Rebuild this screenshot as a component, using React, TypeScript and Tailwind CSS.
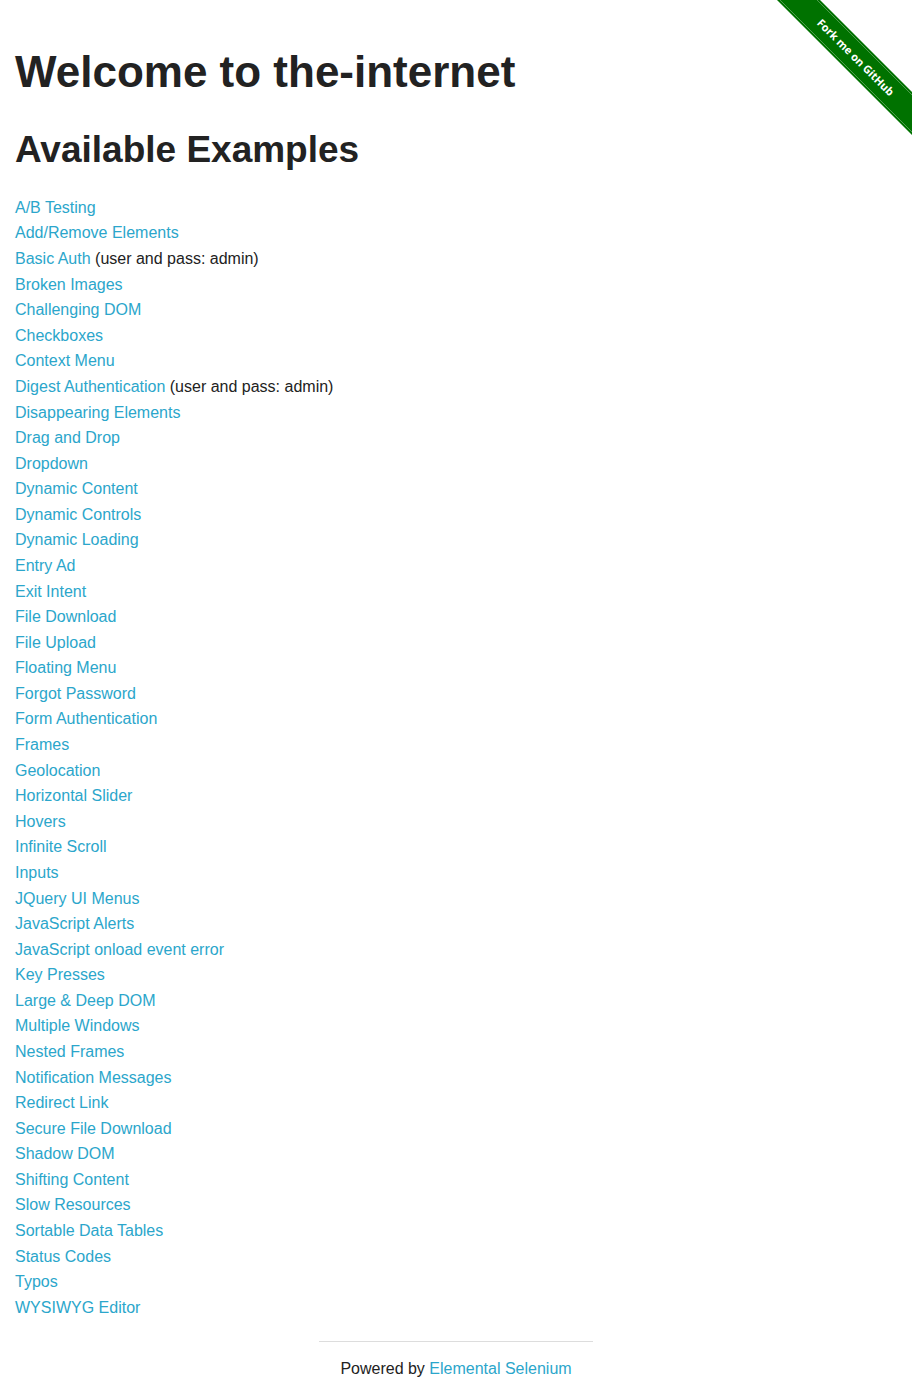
import React from "react";

const items: { name: string; note?: string }[] = [
  { name: "A/B Testing" },
  { name: "Add/Remove Elements" },
  { name: "Basic Auth", note: "(user and pass: admin)" },
  { name: "Broken Images" },
  { name: "Challenging DOM" },
  { name: "Checkboxes" },
  { name: "Context Menu" },
  { name: "Digest Authentication", note: "(user and pass: admin)" },
  { name: "Disappearing Elements" },
  { name: "Drag and Drop" },
  { name: "Dropdown" },
  { name: "Dynamic Content" },
  { name: "Dynamic Controls" },
  { name: "Dynamic Loading" },
  { name: "Entry Ad" },
  { name: "Exit Intent" },
  { name: "File Download" },
  { name: "File Upload" },
  { name: "Floating Menu" },
  { name: "Forgot Password" },
  { name: "Form Authentication" },
  { name: "Frames" },
  { name: "Geolocation" },
  { name: "Horizontal Slider" },
  { name: "Hovers" },
  { name: "Infinite Scroll" },
  { name: "Inputs" },
  { name: "JQuery UI Menus" },
  { name: "JavaScript Alerts" },
  { name: "JavaScript onload event error" },
  { name: "Key Presses" },
  { name: "Large & Deep DOM" },
  { name: "Multiple Windows" },
  { name: "Nested Frames" },
  { name: "Notification Messages" },
  { name: "Redirect Link" },
  { name: "Secure File Download" },
  { name: "Shadow DOM" },
  { name: "Shifting Content" },
  { name: "Slow Resources" },
  { name: "Sortable Data Tables" },
  { name: "Status Codes" },
  { name: "Typos" },
  { name: "WYSIWYG Editor" },
];

function Ribbon() {
  return (
    <svg
      className="absolute top-0 right-0"
      width="149"
      height="149"
      viewBox="0 0 149 149"
    >
      <polygon points="14,0 57,0 149,92 149,135" fill="#007200" />
      <line x1="17" y1="0" x2="149" y2="132" stroke="#ffffff" strokeOpacity="0.3" strokeWidth="1" />
      <line x1="54" y1="0" x2="149" y2="95" stroke="#ffffff" strokeOpacity="0.3" strokeWidth="1" />
      <text
        x="0"
        y="0"
        transform="translate(93 57) rotate(45)"
        textAnchor="middle"
        dominantBaseline="central"
        fill="#ffffff"
        fontFamily="'Open Sans', 'Noto Sans', sans-serif"
        fontWeight="700"
        fontSize="11"
      >
        Fork me on GitHub
      </text>
    </svg>
  );
}

export default function App() {
  return (
    <div
      className="relative min-h-[1377px] bg-white text-[#222222]"
      style={{ fontFamily: "'Liberation Sans', Arial, sans-serif" }}
    >
      <Ribbon />
      <div className="px-[15px] flex flex-col">
        <h1 className="mt-[41px] text-[44px] leading-[1.4] font-bold">
          Welcome to the-internet
        </h1>
        <h2 className="mt-[21px] text-[37px] leading-[1.4] font-bold">
          Available Examples
        </h2>
        <ul className="mt-[19.5px] text-[16px] leading-[25.58px]">
          {items.map((it) => (
            <li key={it.name}>
              <a className="text-[#2ba6cb]" href="#">
                {it.name}
              </a>
              {it.note ? <span> {it.note}</span> : null}
            </li>
          ))}
        </ul>
      </div>
      <div className="w-[274px] mx-auto mt-[20.5px] border-t border-[#dddddd]" />
      <div className="mt-[14.5px] text-center text-[16px] leading-[25.6px]">
        Powered by{" "}
        <a className="text-[#2ba6cb]" href="#">
          Elemental Selenium
        </a>
      </div>
    </div>
  );
}
